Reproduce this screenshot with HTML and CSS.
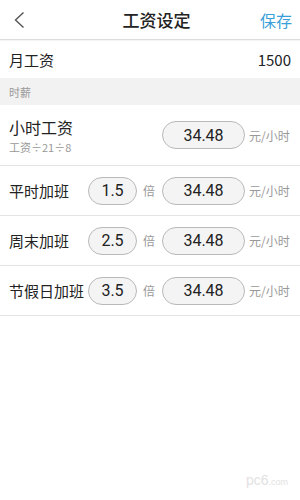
FILE: index.html
```html
<!DOCTYPE html>
<html lang="zh">
<head>
<meta charset="utf-8">
<title>工资设定</title>
<link rel="stylesheet" href="styles.css">
</head>
<body>
<div class="app">
  <header class="topbar">
    <span class="back"><svg width="12" height="18" viewBox="0 0 12 18"><path d="M10.5 1.5 L2.5 9 L10.5 16.5" fill="none" stroke="#555" stroke-width="1.4"/></svg></span>
    <h1 class="title">工资设定</h1>
    <span class="save">保存</span>
  </header>
  <div class="row month">
    <span class="label">月工资</span>
    <span class="amount">1500</span>
  </div>
  <div class="section">时薪</div>
  <div class="row hourly">
    <div class="hlabel">
      <span class="label big">小时工资</span>
      <span class="sub">工资÷21÷8</span>
    </div>
    <span class="pill val">34.48</span>
    <span class="unit">元/小时</span>
  </div>
  <div class="row ot">
    <span class="label olabel">平时加班</span>
    <span class="pill mult">1.5</span>
    <span class="bei">倍</span>
    <span class="pill val">34.48</span>
    <span class="unit">元/小时</span>
  </div>
  <div class="row ot">
    <span class="label olabel">周末加班</span>
    <span class="pill mult">2.5</span>
    <span class="bei">倍</span>
    <span class="pill val">34.48</span>
    <span class="unit">元/小时</span>
  </div>
  <div class="row ot">
    <span class="label olabel">节假日加班</span>
    <span class="pill mult">3.5</span>
    <span class="bei">倍</span>
    <span class="pill val">34.48</span>
    <span class="unit">元/小时</span>
  </div>
  <div class="watermark">pc6<span class="wm-sub">.com</span></div>
</div>
</body>
</html>
```
FILE: styles.css
```css
* { box-sizing: border-box; }
html, body { margin: 0; padding: 0; background: #fff; }
body {
  font-family: "Noto Sans CJK SC", "Noto Sans", "Liberation Sans", sans-serif;
  color: #222;
  width: 300px;
  height: 500px;
  overflow: hidden;
}
.app { position: relative; height: 500px; }
.topbar {
  height: 40px;
  display: flex;
  align-items: center;
  padding: 0 8px 0 13px;
  border-bottom: 1px solid #dcdcdc;
  box-shadow: 0 1px 1px rgba(0,0,0,0.04);
}
.back { width: 40px; display: flex; align-items: center; }
.title {
  flex: 1;
  margin: 0;
  text-align: center;
  font-size: 17px;
  font-weight: 500;
  color: #222;
  padding-left: 8px;
}
.save { width: 40px; text-align: right; color: #3a9fd9; font-size: 16px; }
.row {
  display: flex;
  align-items: center;
  padding: 0 9px;
  border-bottom: 1px solid #e4e4e4;
}
.month { height: 38px; border-bottom: none; }
.label { font-size: 15px; color: #222; }
.amount { margin-left: auto; font-size: 15px; color: #222; }
.section {
  height: 27px;
  background: #f2f2f2;
  color: #999;
  font-size: 11px;
  padding-left: 9px;
  display: flex;
  align-items: center;
}
.hourly { height: 61px; }
.hlabel { display: flex; flex-direction: column; flex: 1; padding-top: 2px; }
.big { font-size: 16px; line-height: 22px; }
.sub { font-size: 11px; color: #999; line-height: 18px; }
.ot { height: 50px; }
.olabel { width: 79px; white-space: nowrap; }
.pill {
  height: 28px;
  border: 1px solid #b9b9b9;
  background: #f4f4f4;
  border-radius: 14px;
  display: flex;
  align-items: center;
  justify-content: center;
  font-size: 16px;
  color: #222;
  font-family: "Roboto", "Noto Sans", sans-serif;
}
.mult { width: 49px; }
.bei { font-size: 12px; color: #999; margin-left: 6px; }
.val { width: 83px; margin-left: auto; }
.unit { font-size: 12px; color: #999; margin-left: 4px; width: 42px; }
.watermark {
  position: absolute;
  right: 12px;
  bottom: 12px;
  font-size: 14px;
  color: #e2e2e2;
  font-family: "Liberation Sans", sans-serif;
}
.wm-sub { font-size: 9px; }
```
